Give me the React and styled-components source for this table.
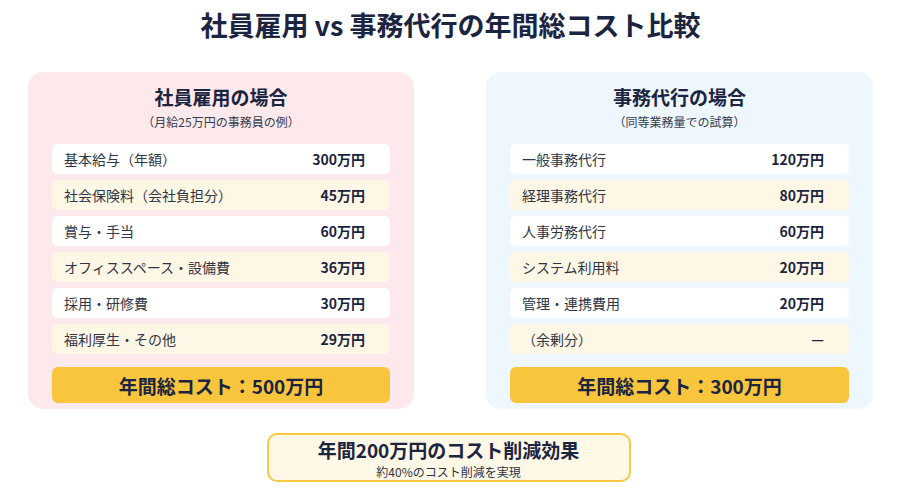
import React from 'react';
import styled, { createGlobalStyle } from 'styled-components';

const employeeRows = [
  { label: '基本給与（年額）', value: '300万円' },
  { label: '社会保険料（会社負担分）', value: '45万円' },
  { label: '賞与・手当', value: '60万円' },
  { label: 'オフィススペース・設備費', value: '36万円' },
  { label: '採用・研修費', value: '30万円' },
  { label: '福利厚生・その他', value: '29万円' },
];

const agencyRows = [
  { label: '一般事務代行', value: '120万円' },
  { label: '経理事務代行', value: '80万円' },
  { label: '人事労務代行', value: '60万円' },
  { label: 'システム利用料', value: '20万円' },
  { label: '管理・連携費用', value: '20万円' },
  { label: '（余剰分）', value: '—' },
];

const GlobalStyle = createGlobalStyle`
  body {
    margin: 0;
    background: #fff;
    font-family: "Noto Sans CJK JP", "Noto Sans", sans-serif;
    color: #1f2a44;
  }
`;

const Page = styled.div`
  width: 901px;
  display: flex;
  flex-direction: column;
  align-items: center;
`;

const Title = styled.h1`
  margin: 0;
  padding-top: 7px;
  font-size: 27px;
  line-height: 36px;
  font-weight: 700;
  color: #1b2440;
`;

const Columns = styled.div`
  margin-top: 29px;
  display: grid;
  grid-template-columns: 386px 387px;
  gap: 72px;
`;

const Card = styled.section`
  background: ${p => p.$tone};
  border-radius: 15px;
  padding: 12px 24px 6px;
  display: flex;
  flex-direction: column;
`;

const CardTitle = styled.h2`
  margin: 0;
  text-align: center;
  font-size: 19px;
  line-height: 26px;
  font-weight: 700;
  color: #1b2440;
`;

const CardNote = styled.div`
  margin-top: 4px;
  text-align: center;
  font-size: 12px;
  line-height: 16px;
  color: #333b4f;
`;

const RowList = styled.div`
  margin-top: 14px;
  display: flex;
  flex-direction: column;
  gap: 6px;
`;

const Row = styled.div`
  height: 30px;
  display: flex;
  align-items: center;
  justify-content: space-between;
  padding: 0 25px 0 12px;
  border-radius: 5px;
  background: ${p => (p.$alt ? '#fef7e6' : '#ffffff')};
  font-size: 14px;
`;

const Label = styled.span`
  color: #2e3547;
`;

const Value = styled.span`
  font-weight: 700;
  color: #1b2440;
`;

const Total = styled.div`
  margin-top: 13px;
  height: 36px;
  border-radius: 6px;
  background: #f8c53c;
  display: flex;
  align-items: center;
  justify-content: center;
  font-size: 19px;
  font-weight: 700;
  color: #1b2440;
`;

const Summary = styled.div`
  margin-top: 24px;
  margin-right: 4px;
  width: 364px;
  box-sizing: border-box;
  border: 2px solid #f8c843;
  border-radius: 10px;
  background: #fff8e6;
  padding-top: 3px;
  text-align: center;
`;

const SummaryHead = styled.div`
  font-size: 19px;
  line-height: 24px;
  font-weight: 700;
  color: #1b2440;
`;

const SummaryNote = styled.div`
  margin-top: 2px;
  font-size: 12px;
  line-height: 16px;
  color: #2e3547;
`;

const CostCard = ({ tone, title, note, rows, total }) => (
  <Card $tone={tone}>
    <CardTitle>{title}</CardTitle>
    <CardNote>{note}</CardNote>
    <RowList>
      {rows.map((r, i) => (
        <Row key={r.label} $alt={i % 2 === 1}>
          <Label>{r.label}</Label>
          <Value>{r.value}</Value>
        </Row>
      ))}
    </RowList>
    <Total>{total}</Total>
  </Card>
);

const App = () => (
  <Page>
    <GlobalStyle />
    <Title>社員雇用 vs 事務代行の年間総コスト比較</Title>
    <Columns>
      <CostCard
        tone="#fde8eb"
        title="社員雇用の場合"
        note="（月給25万円の事務員の例）"
        rows={employeeRows}
        total="年間総コスト：500万円"
      />
      <CostCard
        tone="#eef6fe"
        title="事務代行の場合"
        note="（同等業務量での試算）"
        rows={agencyRows}
        total="年間総コスト：300万円"
      />
    </Columns>
    <Summary>
      <SummaryHead>年間200万円のコスト削減効果</SummaryHead>
      <SummaryNote>約40%のコスト削減を実現</SummaryNote>
    </Summary>
  </Page>
);

export default App;
